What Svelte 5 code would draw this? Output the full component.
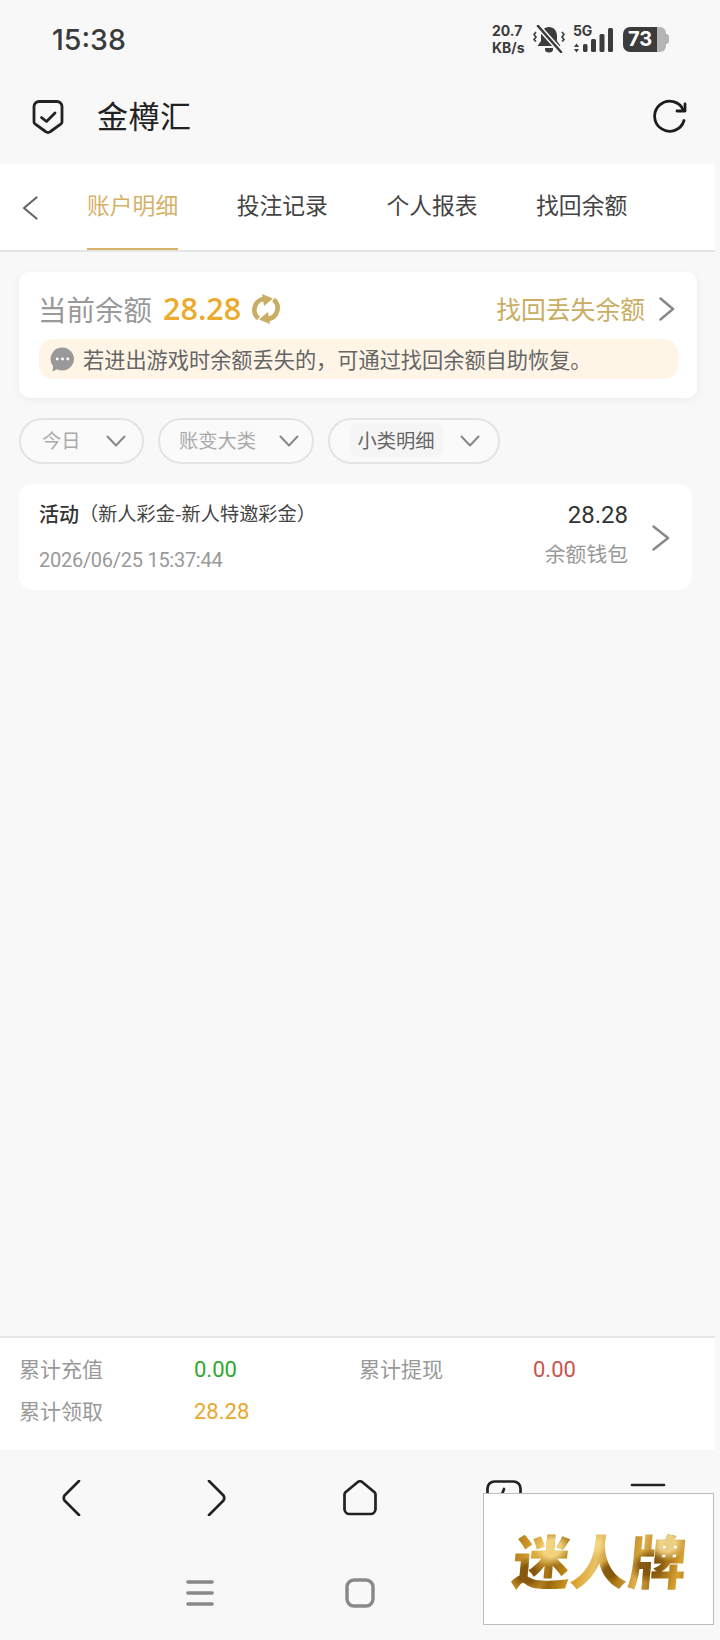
<script>
  const tabs = ['账户明细', '投注记录', '个人报表', '找回余额'];
</script>

<div class="page">
  <header class="status">
    <span class="time">15:38</span>
    <div class="indicators">
      <div class="speed"><span>20.7</span><span>KB/s</span></div>
      <svg class="bell" viewBox="0 0 32 28" width="32" height="28">
        <path d="M16 2c-5 0-8 4-8 9v5l-3.500 5h23L24 16v-5c0-5-3-9-8-9z" fill="#3c3c3c"/>
        <path d="M12 23h8v1.500a4 3 0 0 1-8 0z" fill="#3c3c3c"/>
        <path d="M4 0l25 28" stroke="#f8f8f8" stroke-width="5.500"/>
        <path d="M5 1l23 26" stroke="#3c3c3c" stroke-width="2.600" stroke-linecap="round"/>
        <path d="M3 7l-2 2.500 2 2.500-2 2.500 2 2M29 7l2 2.500-2 2.500 2 2.500-2 2" fill="none" stroke="#3c3c3c" stroke-width="1.600"/>
      </svg>
      <div class="signal">
        <span class="five-g">5G</span>
        <svg viewBox="0 0 40 28" width="40" height="28">
          <path d="M1 22l2.500-3.500L6 22zM1 24l2.500 3.500L6 24z" fill="#3c3c3c"/>
          <rect x="10" y="19" width="4.500" height="8" rx="1.500" fill="#3c3c3c"/>
          <rect x="18" y="14" width="5" height="13" rx="1.500" fill="#3c3c3c"/>
          <rect x="26.500" y="9" width="5" height="18" rx="1.500" fill="#3c3c3c"/>
          <rect x="35" y="3" width="5" height="24" rx="1.500" fill="#3c3c3c"/>
        </svg>
      </div>
      <div class="battery">
        <span class="level">73</span>
        <span class="rest"></span>
        <span class="cap"></span>
      </div>
    </div>
  </header>

  <div class="topbar">
    <svg class="shield" viewBox="0 0 34 35" width="34" height="35" fill="none" stroke="#222" stroke-width="2.800" stroke-linejoin="round" stroke-linecap="round">
      <path d="M8 2.500h18a5 5 0 0 1 5 5V23a2 2 0 0 1-1 1.800L19.500 32.500a4 4 0 0 1-5 0L4 24.800A2 2 0 0 1 3 23V7.500a5 5 0 0 1 5-5z"/>
      <path d="M10.500 18.500l5 4 8.500-8.500"/>
    </svg>
    <h1>金樽汇</h1>
    <svg class="refresh" viewBox="0 0 34 34" width="34" height="34" fill="none" stroke="#1d1d1d" stroke-width="2.800" stroke-linecap="round" stroke-linejoin="round">
      <path d="M30.500 11.500A15 15 0 1 0 31 21.500"/>
      <path d="M32 5v7h-8"/>
    </svg>
  </div>

  <nav class="tabs">
    <svg class="back" viewBox="0 0 16 24" width="16" height="24" fill="none" stroke="#666" stroke-width="2.200" stroke-linecap="round" stroke-linejoin="round"><path d="M14.500 1.500L2 12l12.500 10.500"/></svg>
    {#each tabs as tab, i}
      <span class="tab" class:active={i === 0}>{tab}</span>
    {/each}
  </nav>

  <main>
    <section class="balance">
      <div class="balance-head">
        <span class="label">当前余额</span>
        <span class="amount">28.28</span>
        <svg class="sync" viewBox="0 0 28 30" width="28" height="30" fill="none">
          <path d="M6.500 24.500A11 11 0 0 1 12.500 5" stroke="#c9ad62" stroke-width="4.600"/>
          <path d="M10 0l11 4.500-9 7.500z" fill="#c9ad62"/>
          <path d="M21.500 5.500A11 11 0 0 1 15.500 25" stroke="#c9ad62" stroke-width="4.600"/>
          <path d="M18 30L7 25.500l9-7.500z" fill="#c9ad62"/>
        </svg>
        <span class="recover">找回丢失余额</span>
        <svg class="chev" viewBox="0 0 16 24" width="16" height="24" fill="none" stroke="#888" stroke-width="2.500" stroke-linecap="round" stroke-linejoin="round"><path d="M1.500 1.500L14 12 1.500 22.500"/></svg>
      </div>
      <div class="notice">
        <svg viewBox="0 0 26 26" width="25" height="25">
          <path d="M13 0.500a12 12 0 1 1-5.500 22.700L2.500 25.500l.8-5.500A12 12 0 0 1 13 0.500z" fill="#999"/>
          <circle cx="7.500" cy="12.500" r="1.500" fill="#fff"/><circle cx="13" cy="12.500" r="1.500" fill="#fff"/><circle cx="18.500" cy="12.500" r="1.500" fill="#fff"/>
        </svg>
        <span>若进出游戏时余额丢失的，可通过找回余额自助恢复。</span>
      </div>
    </section>

    <div class="filters">
      <div class="pill p1"><span class="txt">今日</span><svg viewBox="0 0 20 12" width="20" height="12" fill="none" stroke="#888" stroke-width="2" stroke-linecap="round" stroke-linejoin="round"><path d="M1.500 1.500L10 10.500l8.500-9"/></svg></div>
      <div class="pill p2"><span class="txt">账变大类</span><svg viewBox="0 0 20 12" width="20" height="12" fill="none" stroke="#888" stroke-width="2" stroke-linecap="round" stroke-linejoin="round"><path d="M1.500 1.500L10 10.500l8.500-9"/></svg></div>
      <div class="pill p3"><span class="txt sel">小类明细</span><svg viewBox="0 0 20 12" width="20" height="12" fill="none" stroke="#888" stroke-width="2" stroke-linecap="round" stroke-linejoin="round"><path d="M1.500 1.500L10 10.500l8.500-9"/></svg></div>
    </div>

    <article class="record">
      <div class="left">
        <div class="title"><b>活动</b><span>（新人彩金-新人特邀彩金）</span></div>
        <div class="date">2026/06/25 15:37:44</div>
      </div>
      <div class="right">
        <div class="val">28.28</div>
        <div class="wallet">余额钱包</div>
      </div>
      <svg class="chev" viewBox="0 0 18 26" width="18" height="26" fill="none" stroke="#888" stroke-width="2.500" stroke-linecap="round" stroke-linejoin="round"><path d="M1.500 1.500L16 13 1.500 24.500"/></svg>
    </article>
  </main>

  <section class="stats">
    <span class="k">累计充值</span><span class="v green">0.00</span>
    <span class="k">累计提现</span><span class="v red">0.00</span>
    <span class="k">累计领取</span><span class="v orange">28.28</span>
  </section>

  <footer>
    <div class="browser">
      <svg viewBox="0 0 36 36" width="36" height="36" fill="none" stroke="#222" stroke-width="2.700" stroke-linecap="round" stroke-linejoin="round"><path d="M25 1L10.500 15.500Q9 18 10.500 20.500L25 35"/></svg>
      <svg viewBox="0 0 36 36" width="36" height="36" fill="none" stroke="#222" stroke-width="2.700" stroke-linecap="round" stroke-linejoin="round"><path d="M11 1L25.500 15.500Q27 18 25.500 20.500L11 35"/></svg>
      <svg viewBox="0 0 36 36" width="36" height="36" fill="none" stroke="#222" stroke-width="2.700" stroke-linecap="round" stroke-linejoin="round"><path d="M15.500 2.300a3.500 3.500 0 0 1 5 0l12 10a3.200 3.200 0 0 1 1 2.500V29a5 5 0 0 1-5 5H7.500a5 5 0 0 1-5-5V14.800a3.200 3.200 0 0 1 1-2.500z"/></svg>
      <svg viewBox="0 0 36 36" width="36" height="36" fill="none" stroke="#222" stroke-width="2.700" stroke-linecap="round" stroke-linejoin="round"><rect x="1.500" y="1.500" width="33" height="33" rx="7"/><path d="M18 9l-3 8"/></svg>
      <svg viewBox="0 0 36 36" width="36" height="36" fill="none" stroke="#222" stroke-width="2.700" stroke-linecap="round"><path d="M2 5h32M2 18h32M2 31h32"/></svg>
    </div>
    <div class="system">
      <svg viewBox="0 0 30 28" width="30" height="28" fill="none" stroke="#888" stroke-width="3.600" stroke-linecap="round"><path d="M3 3h24M3 14h24M3 25h24"/></svg>
      <svg viewBox="0 0 30 30" width="30" height="30" fill="none" stroke="#888" stroke-width="3.400"><rect x="2" y="2" width="26" height="26" rx="7"/></svg>
      <svg viewBox="0 0 30 30" width="30" height="30" fill="none" stroke="#888" stroke-width="3.400"><path d="M20 3L7 15l13 12"/></svg>
    </div>
  </footer>

  <aside class="logo"><span>迷人牌</span></aside>
</div>

<style>
  :global(body) { margin: 0; background: #f8f8f8; }
  .page {
    position: relative;
    width: 720px;
    height: 1640px;
    overflow: hidden;
    display: flex;
    flex-direction: column;
    background: #f8f8f8;
    font-family: "Noto Sans CJK SC", "Noto Sans", sans-serif;
    color: #333;
  }
  .status {
    box-sizing: border-box;
    height: 80px;
    padding: 0 51px 0 52px;
    display: flex;
    align-items: center;
    justify-content: space-between;
  }
  .time { font: 500 28.500px/1 Inter, sans-serif; color: #3a3a3a; }
  .indicators { display: flex; align-items: center; gap: 8px; margin-top: -2px; }
  .speed {
    display: flex;
    flex-direction: column;
    font: 700 14px/17px Inter, sans-serif;
    color: #3c3c3c;
    width: 33px;
  }
  .signal { position: relative; width: 40px; height: 28px; }
  .signal svg { display: block; }
  .five-g {
    position: absolute;
    left: 0;
    top: -1px;
    font: 700 14px/14px Inter, sans-serif;
    letter-spacing: -0.3px;
    color: #3c3c3c;
  }
  .battery { display: flex; align-items: center; margin-left: 2px; }
  .level {
    width: 34px;
    height: 25px;
    background: #3c3c3c;
    border-radius: 7px 0 0 7px;
    color: #fff;
    font: 700 20px/25px Inter, sans-serif;
    text-align: center;
  }
  .rest { width: 9px; height: 25px; background: #b4b4b4; border-radius: 0 6px 6px 0; }
  .cap { width: 3px; height: 10px; background: #b4b4b4; border-radius: 0 3px 3px 0; }

  .topbar {
    box-sizing: border-box;
    height: 84px;
    padding: 0 33px 12px 31px;
    display: flex;
    align-items: center;
  }
  .topbar h1 { margin: -3px 0 0 32px; font-size: 31px; font-weight: 400; line-height: 40px; color: #222; letter-spacing: 0.5px; }
  .refresh { margin-left: auto; }

  .tabs {
    box-sizing: border-box;
    width: 715px;
    height: 88px;
    background: #fff;
    border-bottom: 2px solid #e6e6e6;
    display: flex;
    padding-left: 22px;
    gap: 58.500px;
  }
  .back { margin: 32px -9.500px 0 0; }
  .tab {
    box-sizing: border-box;
    height: 86px;
    padding-top: 23px;
    font-size: 22.800px;
    line-height: 36px;
    color: #444;
  }
  .tab.active { color: #d4b26a; border-bottom: 2px solid #d4b26a; }

  main { flex: 1; }
  .balance {
    box-sizing: border-box;
    width: 678px;
    height: 126px;
    margin: 20px 0 0 19px;
    padding: 17px 19px 0 20px;
    background: #fff;
    border-radius: 10px;
    box-shadow: 0 2px 8px rgba(0,0,0,.05);
  }
  .balance-head { display: flex; align-items: center; height: 40px; }
  .label { font-size: 28.500px; color: #999; margin: -2px 0 0 -1px; }
  .amount { margin-left: 11px; font: 600 30.500px/1 "Open Sans", sans-serif; color: #ebab2e; margin-top: -1px; }
  .sync { margin-left: 11px; }
  .recover { margin-left: auto; font-size: 24.800px; color: #c9ad62; margin-top: -3px; }
  .balance-head .chev { margin: 0 3px 0 14px; }
  .notice {
    box-sizing: border-box;
    height: 40px;
    margin-top: 10px;
    padding-left: 11px;
    display: flex;
    align-items: center;
    gap: 8px;
    background: #fff5e6;
    border-radius: 14px;
    font-size: 21.200px;
    color: #666;
  }
  .notice span { margin-top: -2px; }

  .filters { display: flex; margin: 20px 0 0 19px; gap: 14px; }
  .pill {
    box-sizing: border-box;
    height: 46px;
    display: flex;
    align-items: center;
    border: 2px solid #e4e4e4;
    border-radius: 23px;
    background: #fafafa;
    justify-content: space-between;
  }
  .p1 { width: 125px; padding: 0 16px 0 21px; }
  .p2 { width: 155.500px; padding: 0 13px 0 19px; }
  .p3 { width: 172px; padding: 0 18px 0 20px; }
  .txt { font-size: 19.300px; color: #aaa; margin-top: -3px; }
  .txt.sel { padding: 3px 8px; margin-top: -3px; background: #f5f5f5; border-radius: 8px; color: #666; }

  .record {
    box-sizing: border-box;
    width: 673px;
    height: 106px;
    margin: 20px 0 0 19px;
    padding: 0 22px 0 20px;
    display: flex;
    background: #fff;
    border-radius: 13px;
  }
  .left { flex: 1; padding-top: 13px; }
  .title { height: 32px; display: flex; align-items: center; }
  .title b { font-size: 20px; font-weight: 500; color: #333; }
  .title span { font-size: 19.200px; color: #444; margin-top: -1px; }
  .date { margin-top: 16px; font: 400 20px/30px Roboto, sans-serif; letter-spacing: -0.27px; color: #999; }
  .right { padding-top: 15px; text-align: right; }
  .val { font: 400 24px/32px Roboto, sans-serif; color: #333; }
  .wallet { margin-top: 6px; font-size: 20.800px; line-height: 32px; color: #999; }
  .record .chev { margin: 41px 0 0 24px; }

  .stats {
    box-sizing: border-box;
    width: 715px;
    height: 114px;
    padding: 12px 0 0 19px;
    background: #fff;
    border-top: 2px solid #e6e6e6;
    display: grid;
    grid-template-columns: 175px 165px 174px 1fr;
    grid-auto-rows: 42px;
    align-items: center;
  }
  .k { font-size: 21px; color: #999; margin-top: -6px; }
  .v { font: 400 22px/1 Roboto, sans-serif; margin-top: -3px; }
  .green { color: #2fa82f; }
  .red { color: #c9534f; }
  .orange { color: #e8a82f; }

  footer { height: 190px; }
  .browser {
    display: grid;
    grid-template-columns: repeat(5, 144px);
    padding-top: 30px;
    justify-items: center;
  }
  .browser svg { display: block; }
  .system {
    display: grid;
    grid-template-columns: repeat(3, 160px);
    justify-content: center;
    justify-items: center;
    align-items: center;
    margin-top: 62px;
  }
  .logo {
    position: absolute;
    left: 483px;
    top: 1493px;
    box-sizing: border-box;
    width: 231px;
    height: 132px;
    background: #fff;
    border: 1px solid #bdbdbd;
    display: flex;
    align-items: center;
    justify-content: center;
  }
  .logo span {
    margin-left: 3px;
    font-size: 58px;
    font-weight: 900;
    line-height: 70px;
    transform: skewX(-5deg);
    background:
      radial-gradient(circle at 22% 35%, rgba(255, 226, 140, .85) 0 6%, transparent 13%),
      radial-gradient(circle at 9% 72%, rgba(120, 76, 8, .85) 0 5%, transparent 11%),
      radial-gradient(circle at 46% 30%, rgba(245, 214, 130, .9) 0 5%, transparent 12%),
      radial-gradient(circle at 56% 68%, rgba(122, 78, 8, .8) 0 5%, transparent 11%),
      radial-gradient(circle at 78% 60%, rgba(120, 76, 8, .85) 0 6%, transparent 12%),
      radial-gradient(circle at 88% 28%, rgba(250, 224, 150, .85) 0 5%, transparent 11%),
      linear-gradient(100deg, #a8720f 0%, #e0aa3c 14%, #99680e 26%, #d89c22 38%, #e9c266 48%, #a8720f 60%, #dfae48 72%, #96650f 84%, #d9a232 94%, #a8720f 100%);
    -webkit-background-clip: text;
    background-clip: text;
    color: transparent;
  }
</style>
